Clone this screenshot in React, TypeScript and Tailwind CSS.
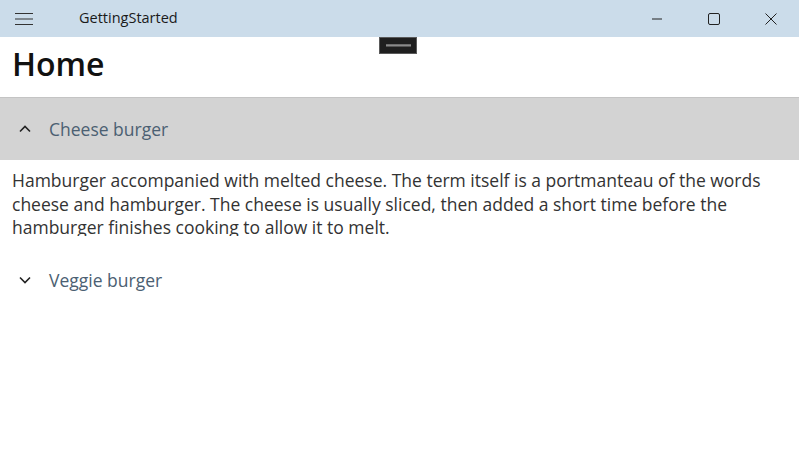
import React from "react";

export default function App() {
  const font = { fontFamily: '"Open Sans", "Noto Sans", sans-serif' };
  return (
    <div className="w-[799px] h-[451px] bg-white overflow-hidden relative" style={font}>
      {/* Title bar */}
      <div className="h-[37px] bg-[#cbdcea] flex items-center">
        <div className="w-[48px] h-full flex items-center justify-center">
          <svg width="20" height="14" viewBox="0 0 20 14">
            <path d="M1 1.5h18M1 7h18M1 12.5h18" stroke="#333" strokeWidth="1.2" />
          </svg>
        </div>
        <div className="ml-[31px] text-[14.5px] text-[#1a1a1a] mt-[-1px]">
          GettingStarted
        </div>
        <div className="ml-auto flex h-full">
          <div className="w-[57px] h-full flex items-center justify-center">
            <svg width="12" height="12" viewBox="0 0 12 12"><path d="M1 6h10" stroke="#222" strokeWidth="1" /></svg>
          </div>
          <div className="w-[57px] h-full flex items-center justify-center">
            <svg width="12" height="12" viewBox="0 0 12 12"><rect x="0.5" y="0.5" width="11" height="11" rx="1.5" fill="none" stroke="#222" strokeWidth="1" /></svg>
          </div>
          <div className="w-[57px] h-full flex items-center justify-center">
            <svg width="12" height="12" viewBox="0 0 12 12"><path d="M0.5 0.5l11 11M11.5 0.5l-11 11" stroke="#222" strokeWidth="1" /></svg>
          </div>
        </div>
      </div>

      {/* drag handle overlay */}
      <div className="absolute left-[379px] top-[37px] w-[38px] h-[17px] bg-[#1f1f1f] border border-[#5a5a5a] flex items-center justify-center">
        <div className="w-[25px] flex flex-col">
          <div className="h-[1px] bg-[#6e6e6e]" />
          <div className="h-[1px] bg-[#8a8a8a]" />
          <div className="h-[1px] bg-[#555]" />
        </div>
      </div>

      {/* Header */}
      <div className="h-[60px] flex items-center px-[12px] pb-[6px]">
        <h1 className="text-[32px] font-semibold text-[#111] leading-none" style={font}>Home</h1>
      </div>

      {/* Accordion item 1 */}
      <div className="h-[63px] bg-[#d3d3d3] border-t border-[#c4c4c4] flex items-center">
        <div className="w-[49px] flex justify-center">
          <svg width="14" height="10" viewBox="0 0 14 10">
            <path d="M2 7.5L7 2.5L12 7.5" fill="none" stroke="#222" strokeWidth="1.6" />
          </svg>
        </div>
        <span className="text-[17.5px] text-[#4b6072]">Cheese burger</span>
      </div>
      <div className="h-[76px] overflow-hidden px-[12px] pt-[9px]">
        <p className="text-[17.5px] leading-[23.5px] text-[#333]">
          Hamburger accompanied with melted cheese. The term itself is a portmanteau of the words cheese and hamburger. The cheese is usually sliced, then added a short time before the hamburger finishes cooking to allow it to melt.
        </p>
      </div>

      {/* Accordion item 2 */}
      <div className="h-[60px] flex items-center mt-[14px]">
        <div className="w-[49px] flex justify-center">
          <svg width="14" height="10" viewBox="0 0 14 10">
            <path d="M2 2.5L7 7.5L12 2.5" fill="none" stroke="#222" strokeWidth="1.6" />
          </svg>
        </div>
        <span className="text-[17.5px] text-[#4b6072]">Veggie burger</span>
      </div>
    </div>
  );
}
